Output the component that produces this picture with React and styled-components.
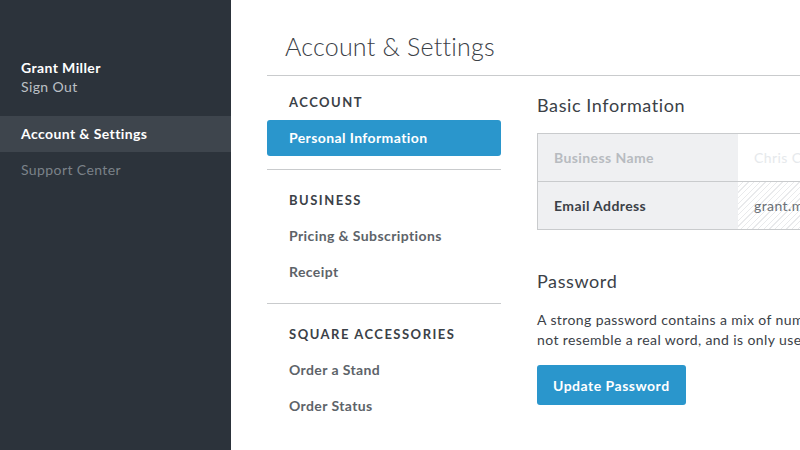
import React from 'react';
import styled, {createGlobalStyle} from 'styled-components';

const colors = {
    sidebar: '#2c333b',
    sidebarActive: '#3e454d',
    blue: '#2a96cc',
    text: '#3b4147',
    muted: '#5d6369',
    line: '#c9cbcd',
    cell: '#eff0f2',
};

const GlobalStyle = createGlobalStyle`
    html, body {
        margin: 0;
        height: 100%;
        overflow: hidden;
        background: #fff;
    }
    body {
        font-family: Lato, "Open Sans", sans-serif;
        color: ${colors.text};
        letter-spacing: 0.4px;
        -webkit-font-smoothing: antialiased;
    }
`;

const Layout = styled.div`
    display: flex;
    height: 100vh;
    width: 100vw;
    overflow: hidden;
`;

const Sidebar = styled.aside`
    flex: 0 0 231px;
    background: ${colors.sidebar};
    padding-top: 58px;
    box-sizing: border-box;
`;

const User = styled.div`
    padding: 0 21px;
    margin-bottom: 20px;
`;

const UserName = styled.div`
    color: #fff;
    font-size: 14px;
    font-weight: 700;
    line-height: 19px;
`;

const SignOut = styled.a`
    display: block;
    color: #bcc0c5;
    font-size: 14px;
    line-height: 19px;
`;

const SideLink = styled.a`
    display: block;
    height: 36px;
    line-height: 36px;
    padding: 0 21px;
    font-size: 14px;
    font-weight: ${p => p.$active ? 700 : 400};
    color: ${p => p.$active ? '#fff' : '#7b8289'};
    background: ${p => p.$active ? colors.sidebarActive : 'transparent'};
`;

const Main = styled.main`
    flex: 1;
    padding-left: 36px;
    min-width: 0;
`;

const Header = styled.header`
    height: 76px;
    border-bottom: 1px solid ${colors.line};
    display: flex;
    align-items: center;
    padding: 16px 0 0 18px;
    box-sizing: border-box;
`;

const Title = styled.h1`
    margin: 0;
    font-size: 25px;
    font-weight: 300;
    color: ${colors.text};
    letter-spacing: 0.2px;
`;

const Body = styled.div`
    display: flex;
    gap: 36px;
`;

const Nav = styled.nav`
    flex: 0 0 234px;
`;

const NavSection = styled.div`
    padding: 12px 0 13px;
    border-bottom: 1px solid ${p => p.$last ? 'transparent' : colors.line};
    &:first-child {
        padding-top: 8px;
    }
`;

const NavHeading = styled.div`
    height: 36px;
    line-height: 36px;
    padding: 0 22px;
    font-size: 13px;
    font-weight: 700;
    letter-spacing: 1.5px;
    color: ${colors.text};
`;

const NavItem = styled.a`
    display: block;
    height: 36px;
    line-height: 36px;
    padding: 0 22px;
    font-size: 14px;
    font-weight: 700;
    border-radius: 3px;
    color: ${p => p.$active ? '#fff' : colors.muted};
    background: ${p => p.$active ? colors.blue : 'transparent'};
`;

const Content = styled.section`
    flex: 0 0 560px;
    padding-top: 11px;
`;

const SectionTitle = styled.h2`
    margin: ${p => p.$top || 0}px 0 0;
    height: 36px;
    line-height: 36px;
    font-size: 18px;
    font-weight: 400;
    letter-spacing: 0.6px;
    color: ${colors.text};
`;

const Table = styled.div`
    margin-top: 10px;
    border: 1px solid ${colors.line};
`;

const Row = styled.div`
    display: grid;
    grid-template-columns: 200px 1fr;
    height: 47px;
    & + & {
        border-top: 1px solid ${colors.line};
    }
`;

const Label = styled.div`
    background: ${colors.cell};
    padding-left: 16px;
    display: flex;
    align-items: center;
    font-size: 14px;
    font-weight: 700;
    color: ${p => p.$disabled ? '#b7bbc0' : colors.text};
`;

const Value = styled.div`
    padding-left: 16px;
    display: flex;
    align-items: center;
    font-size: 14px;
    color: ${p => p.$disabled ? '#e6e9ec' : '#6b7076'};
    background: ${p => p.$hatched
        ? `repeating-linear-gradient(135deg, #fff 0 3px, #e9eaec 3px 4px)`
        : '#fff'};
`;

const Paragraph = styled.p`
    margin: 11px 0 0;
    font-size: 14px;
    line-height: 20px;
    color: ${colors.text};
    white-space: nowrap;
`;

const Button = styled.button`
    margin-top: 15px;
    height: 40px;
    padding: 0 16px;
    border: 0;
    border-radius: 3px;
    background: ${colors.blue};
    color: #fff;
    font-family: inherit;
    font-size: 14px;
    font-weight: 700;
    letter-spacing: 0.5px;
    cursor: pointer;
`;

const sections = [
    {title: 'ACCOUNT', items: ['Personal Information'], active: 'Personal Information'},
    {title: 'BUSINESS', items: ['Pricing & Subscriptions', 'Receipt']},
    {title: 'SQUARE ACCESSORIES', items: ['Order a Stand', 'Order Status']},
];

export default function App() {
    return (
        <Layout>
            <GlobalStyle/>
            <Sidebar>
                <User>
                    <UserName>Grant Miller</UserName>
                    <SignOut>Sign Out</SignOut>
                </User>
                <SideLink $active>Account &amp; Settings</SideLink>
                <SideLink>Support Center</SideLink>
            </Sidebar>
            <Main>
                <Header>
                    <Title>Account &amp; Settings</Title>
                </Header>
                <Body>
                    <Nav>
                        {sections.map((s, i) => (
                            <NavSection key={s.title} $last={i === sections.length - 1}>
                                <NavHeading>{s.title}</NavHeading>
                                {s.items.map(item => (
                                    <NavItem key={item} $active={item === s.active}>{item}</NavItem>
                                ))}
                            </NavSection>
                        ))}
                    </Nav>
                    <Content>
                        <SectionTitle>Basic Information</SectionTitle>
                        <Table>
                            <Row>
                                <Label $disabled>Business Name</Label>
                                <Value $disabled>Chris Collins</Value>
                            </Row>
                            <Row>
                                <Label>Email Address</Label>
                                <Value $hatched>grant.miller@example.com</Value>
                            </Row>
                        </Table>
                        <SectionTitle $top={33}>Password</SectionTitle>
                        <Paragraph>
                            A strong password contains a mix of numbers, letters, and symbols. It is hard to guess, does<br/>
                            not resemble a real word, and is only used for this account.
                        </Paragraph>
                        <Button>Update Password</Button>
                        <SectionTitle $top={36}>Two-Step Verification</SectionTitle>
                    </Content>
                </Body>
            </Main>
        </Layout>
    );
}
